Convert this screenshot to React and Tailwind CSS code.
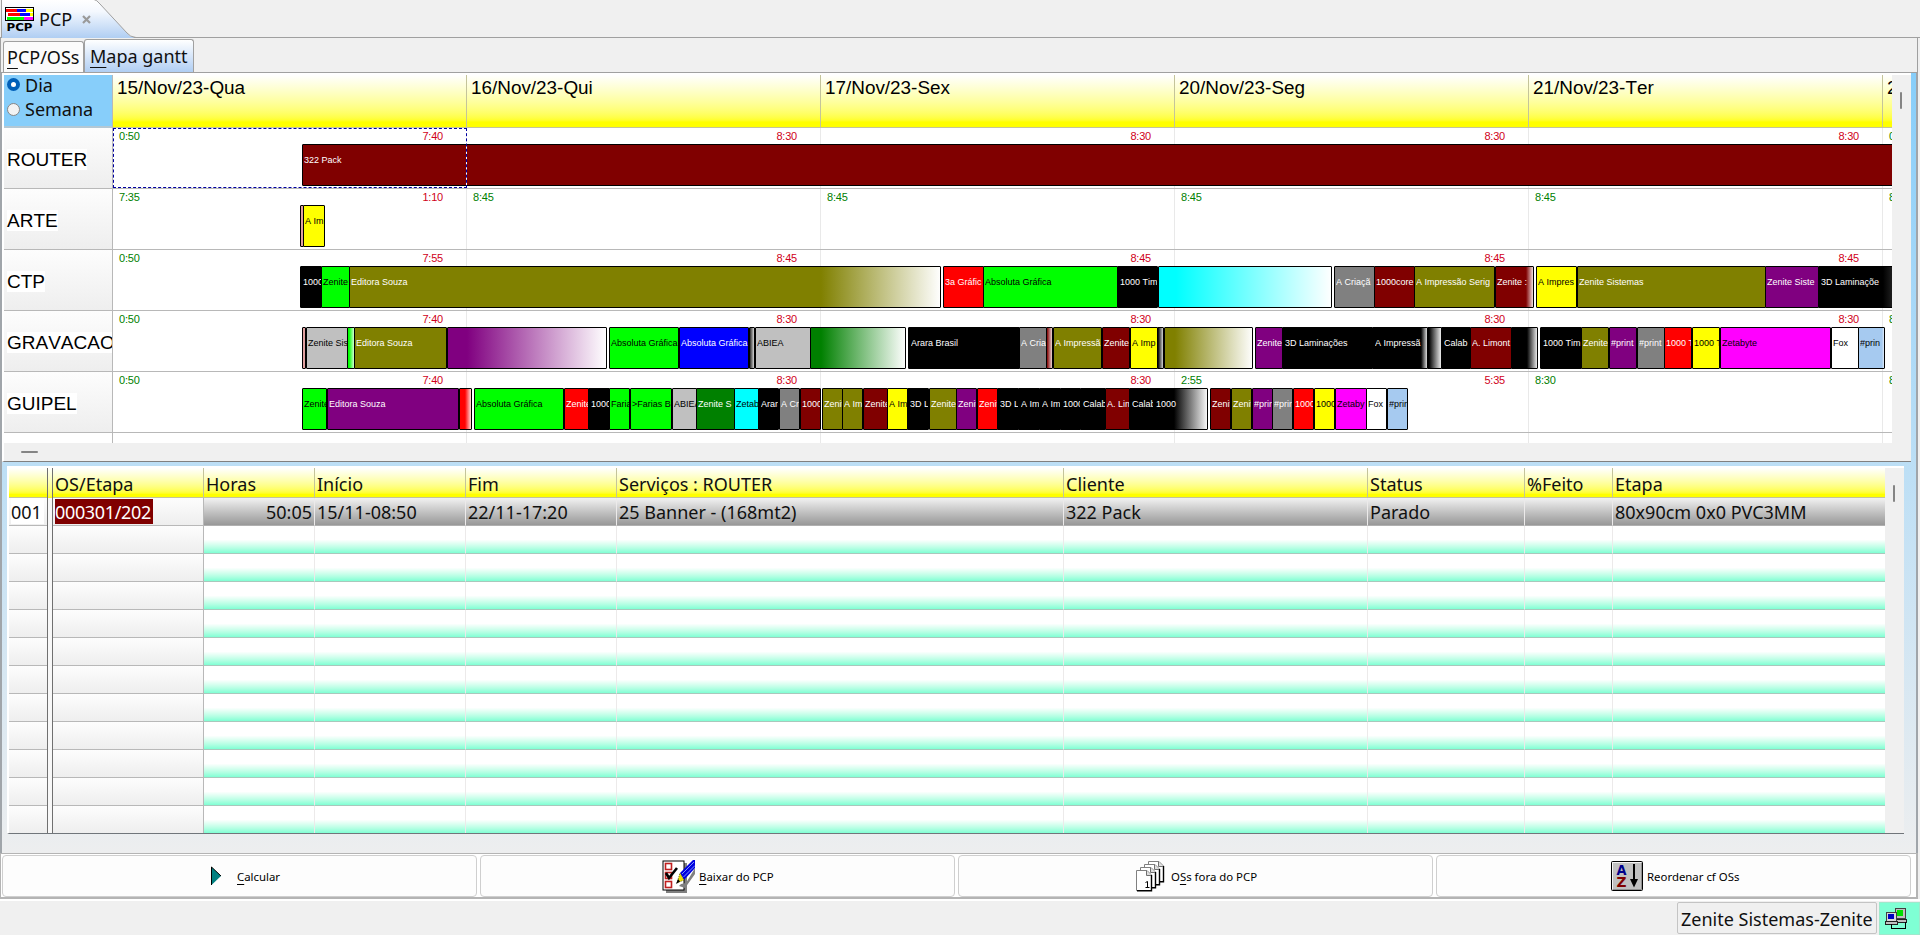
import React from "react";

const SOLID = {
  maroon: "bg-[#800000]",
  pink: "bg-[#e0a0a0]",
  yellow: "bg-[#ffff00]",
  black: "bg-black",
  lime: "bg-[#00ff00]",
  olive: "bg-[#808000]",
  red: "bg-[#ff0000]",
  cyan: "bg-[#00ffff]",
  gray: "bg-[#808080]",
  silver: "bg-[#c0c0c0]",
  purple: "bg-[#800080]",
  blue: "bg-[#0000ff]",
  green: "bg-[#008000]",
  magenta: "bg-[#ff00ff]",
  white: "bg-white",
  sky: "bg-[#a6caf0]",
};

const FADE = {
  maroon: "#800000",
  black: "#000000",
  lime: "#00ff00",
  olive: "#808000",
  red: "#ff0000",
  cyan: "#00ffff",
  purple: "#800080",
  green: "#008000",
  sky: "#a6caf0",
};

const DARK_TEXT = ["yellow", "lime", "cyan", "silver", "magenta", "white", "sky"];

// Bar: [start, end, color, label, solid-until position when the bar fades out]
const ROWS = [
  {
    name: "ROUTER",
    green: ["0:50", "", "", "", "", "0:50"],
    red: ["7:40", "8:30", "8:30", "8:30", "8:30", ""],
    bars: [[302, 1900, "maroon", "322 Pack"]],
  },
  {
    name: "ARTE",
    green: ["7:35", "8:45", "8:45", "8:45", "8:45", "8:45"],
    red: ["1:10", "", "", "", "", ""],
    bars: [
      [300, 304, "pink", ""],
      [303, 325, "yellow", "A Im"],
    ],
  },
  {
    name: "CTP",
    green: ["0:50", "", "", "", "", ""],
    red: ["7:55", "8:45", "8:45", "8:45", "8:45", ""],
    bars: [
      [300, 322, "black", "1000"],
      [321, 350, "lime", "Zenite"],
      [349, 941, "olive", "Editora Souza", 820],
      [943, 984, "red", "3a Gráfic"],
      [983, 1118, "lime", "Absoluta Gráfica"],
      [1117, 1158, "black", "1000 Tim"],
      [1158, 1332, "cyan", "", 1175],
      [1334, 1375, "gray", "A Criaçã"],
      [1374, 1415, "maroon", "1000core"],
      [1414, 1495, "olive", "A Impressão Serig"],
      [1495, 1534, "maroon", "Zenite :", 1525],
      [1536, 1577, "yellow", "A Impres"],
      [1577, 1766, "olive", "Zenite Sistemas"],
      [1765, 1819, "purple", "Zenite Siste"],
      [1818, 1960, "black", "3D Laminaçõe", 1882],
    ],
  },
  {
    name: "GRAVACAO",
    green: ["0:50", "", "", "", "", "8:30"],
    red: ["7:40", "8:30", "8:30", "8:30", "8:30", ""],
    bars: [
      [302, 306, "pink", ""],
      [306, 348, "silver", "Zenite Sis"],
      [347, 355, "lime", "", 348],
      [354, 447, "olive", "Editora Souza"],
      [447, 607, "purple", "", 466],
      [609, 679, "lime", "Absoluta Gráfica"],
      [679, 749, "blue", "Absoluta Gráfica"],
      [749, 755, "black", "", 748],
      [755, 811, "silver", "ABIEA"],
      [810, 906, "green", "", 820],
      [908, 1020, "black", "Arara Brasil"],
      [1019, 1047, "gray", "A Cria"],
      [1046, 1053, "maroon", "", 1046],
      [1053, 1102, "olive", "A Impressã"],
      [1102, 1130, "maroon", "Zenite"],
      [1130, 1158, "yellow", "A Imp"],
      [1157, 1164, "black", "", 1157],
      [1164, 1253, "olive", "", 1174],
      [1255, 1283, "purple", "Zenite"],
      [1282, 1373, "black", "3D Laminações"],
      [1372, 1428, "black", "A Impressã", 1420],
      [1427, 1442, "black", "", 1428],
      [1441, 1471, "black", "Calab"],
      [1470, 1512, "maroon", "A. Limont"],
      [1511, 1538, "black", "", 1526],
      [1540, 1582, "black", "1000 Tim"],
      [1581, 1609, "olive", "Zenite"],
      [1609, 1637, "purple", "#print"],
      [1637, 1665, "gray", "#print"],
      [1664, 1692, "red", "1000 T"],
      [1692, 1720, "yellow", "1000 T"],
      [1720, 1831, "magenta", "Zetabyte"],
      [1831, 1859, "white", "Fox"],
      [1858, 1885, "sky", "#prin", 1881],
    ],
  },
  {
    name: "GUIPEL",
    green: ["0:50", "", "", "2:55", "8:30", "8:30"],
    red: ["7:40", "8:30", "8:30", "5:35", "", ""],
    bars: [
      [302, 327, "lime", "Zenite"],
      [327, 459, "purple", "Editora Souza"],
      [459, 472, "red", "", 464],
      [474, 564, "lime", "Absoluta Gráfica"],
      [564, 589, "red", "Zenite"],
      [588, 610, "black", "1000"],
      [609, 630, "lime", "Farias"],
      [630, 672, "lime", ">Farias B"],
      [672, 697, "silver", "ABIEA"],
      [696, 735, "green", "Zenite S"],
      [734, 759, "cyan", "Zetab"],
      [758, 779, "black", "Arara"],
      [779, 800, "gray", "A Cri"],
      [800, 821, "maroon", "1000"],
      [822, 843, "olive", "Zenit"],
      [842, 863, "olive", "A Im"],
      [863, 888, "maroon", "Zenite"],
      [887, 908, "yellow", "A Im"],
      [907, 929, "black", "3D L"],
      [929, 957, "olive", "Zenite"],
      [956, 977, "purple", "Zenit"],
      [977, 998, "red", "Zenit"],
      [997, 1019, "black", "3D L"],
      [1018, 1040, "black", "A Im"],
      [1039, 1061, "black", "A Im"],
      [1060, 1081, "black", "1000"],
      [1080, 1106, "black", "Calab"],
      [1105, 1130, "maroon", "A. Lim"],
      [1129, 1155, "black", "Calab"],
      [1153, 1208, "black", "1000", 1173],
      [1210, 1231, "maroon", "Zenit"],
      [1231, 1252, "olive", "Zenit"],
      [1252, 1273, "purple", "#prin"],
      [1272, 1293, "gray", "#prin"],
      [1293, 1314, "red", "1000"],
      [1314, 1335, "yellow", "1000"],
      [1335, 1367, "magenta", "Zetaby"],
      [1366, 1387, "white", "Fox"],
      [1387, 1408, "sky", "#prin"],
    ],
  },
];

const DAYS = [
  "15/Nov/23-Qua",
  "16/Nov/23-Qui",
  "17/Nov/23-Sex",
  "20/Nov/23-Seg",
  "21/Nov/23-Ter",
  "22/Nov/23-Qua",
];

function Bar({ bar, prevEnd }) {
  const [start, end, color, label, solid] = bar;
  const style = { width: end - start, marginLeft: start - prevEnd };
  if (solid !== undefined) {
    style.background = `linear-gradient(to right, ${FADE[color]} ${solid - start}px, #fff ${end - start - 1}px)`;
  }
  const dark = DARK_TEXT.includes(color);
  return (
    <div
      className={`h-[42px] shrink-0 overflow-hidden whitespace-pre rounded-[1px] border border-black pl-px pt-[9px] text-[9px] leading-[12px] ${
        dark ? "text-black" : "text-white"
      } ${SOLID[color] || ""}`}
      style={style}
    >
      <div className={`overflow-hidden ${color === "black" ? "ml-px" : ""}`}>{label}</div>
    </div>
  );
}

function GanttRow({ row, selected }) {
  let prev = 113;
  return (
    <div className="flex h-[61px] shrink-0">
      <div className="w-[108px] shrink-0 overflow-hidden border-b border-[#b8b8b8] bg-linear-to-b from-[#fdfdfd] to-[#eeeeee] pl-[3px] pt-[21px]">
        <span className="block w-fit whitespace-nowrap bg-white text-[19px] leading-[21px] text-black">{row.name}</span>
      </div>
      <div className="relative w-[1780px] overflow-hidden border-b border-l border-[#b8b8b8] bg-[repeating-linear-gradient(to_right,white_0_353px,#e9e9e9_353px_354px)]">
        <div className="flex h-[16px]">
          {row.green.map((g, i) => (
            <div key={i} className="flex w-[354px] shrink-0 justify-between pl-[6px] pr-[24px] text-[11px] leading-[16px] tracking-[-0.2px]">
              <span className="text-[#008000]">{g}</span>
              <span className="text-[#d00020]">{row.red[i]}</span>
            </div>
          ))}
        </div>
        <div className="flex">
          {row.bars.map((b, i) => {
            const el = <Bar key={i} bar={b} prevEnd={prev} />;
            prev = b[1];
            return el;
          })}
        </div>
        {selected && (
          <>
            <div className="absolute left-[353px] top-0 h-[60px] w-px bg-white" />
            <div className="absolute left-0 top-0 h-[60px] w-[354px] border border-dashed border-[#0000a0]" />
          </>
        )}
      </div>
    </div>
  );
}

const COLS = [
  ["Horas", "w-[111px]"],
  ["Início", "w-[151px]"],
  ["Fim", "w-[151px]"],
  ["Serviços : ROUTER", "w-[447px]"],
  ["Cliente", "w-[304px]"],
  ["Status", "w-[157px]"],
  ["%Feito", "w-[88px]"],
  ["Etapa", "w-[272px]"],
];

const DATA = ["50:05", "15/11-08:50", "22/11-17:20", "25 Banner - (168mt2)", "322 Pack", "Parado", "", "80x90cm 0x0 PVC3MM"];

function TableRow({ first }) {
  return (
    <div className="flex h-7 shrink-0 leading-[29px]">
      <div className="w-[38px] shrink-0 border-b border-[#b8b8b8] bg-linear-to-b from-[#fdfdfd] to-[#eeeeee] pl-[2px]">
        {first && <span className="block h-[26px] w-fit bg-white pr-[2px]">001</span>}
      </div>
      <div className="w-[6px] shrink-0 border-x border-[#707070] bg-[#f8f8f8]" />
      <div className="w-[151px] shrink-0 border-b border-r border-[#b8b8b8] bg-linear-to-b from-[#fdfdfd] to-[#eeeeee] pl-[2px] pt-px">
        {first && (
          <span className="block h-[25px] w-[98px] overflow-hidden whitespace-nowrap bg-[#800000] leading-[27px] tracking-[-0.35px] text-white">
            000301/202
          </span>
        )}
      </div>
      {COLS.map(([name, w], i) => (
        <div
          key={name}
          className={`${w} shrink-0 overflow-hidden whitespace-nowrap px-[2px] ${i < 7 ? "border-r border-r-[#eceaea]" : ""} ${
            i === 0 && first ? "text-right" : ""
          } ${
            first
              ? "border-b border-b-[#b0b0b0] bg-linear-to-b from-[#f2f2f2] to-[#989898]"
              : "border-b border-b-[#a9c8bc] bg-linear-to-b from-white from-50% to-[#7fffd4]"
          }`}
        >
          {first ? DATA[i] : ""}
        </div>
      ))}
    </div>
  );
}

function PcpIcon() {
  return (
    <svg width="30" height="26" viewBox="0 0 30 26" shapeRendering="crispEdges">
      <rect x="0" y="0" width="29" height="14" fill="#000" />
      <rect x="1" y="1" width="27" height="12" fill="#fff" />
      <rect x="1" y="2" width="11" height="3" fill="#f00" />
      <rect x="12" y="2" width="9" height="3" fill="#00f" />
      <rect x="21" y="2" width="7" height="3" fill="#ff0" />
      <rect x="3" y="6" width="12" height="3" fill="#f00" />
      <rect x="15" y="6" width="10" height="3" fill="#00f" />
      <rect x="25" y="6" width="3" height="3" fill="#ff0" />
      <rect x="2" y="10" width="17" height="3" fill="#0f0" />
      <rect x="19" y="10" width="9" height="3" fill="#f0f" />
      <text x="1.5" y="24" fontFamily="DejaVu Sans, sans-serif" fontWeight="700" fontSize="10.5" textLength="26" lengthAdjust="spacingAndGlyphs">PCP</text>
    </svg>
  );
}

function CheckIcon() {
  return (
    <svg width="33" height="33" viewBox="0 0 33 33">
      <path d="M4 3H25V33H4z" fill="#808080" />
      <rect x="1" y="1" width="21" height="29" fill="#fff" stroke="#000" />
      <g fill="none" stroke="#c02020" strokeWidth="1.6">
        <rect x="3.5" y="3.5" width="6" height="6" />
        <rect x="3.5" y="12.5" width="6" height="6" />
        <rect x="3.5" y="21.5" width="6" height="6" />
      </g>
      <path d="M4 13L7 18L15 8" fill="none" stroke="#000" strokeWidth="2.6" />
      <path d="M19 24L24 23L33 8V14L23 28L17 26z" fill="#808080" />
      <path d="M18 13L31 0H33V8L22 20z" fill="#0000e0" />
      <path d="M20 14L32 2M21.500 17L33 5.500" stroke="#9ab8ff" strokeWidth="0.8" />
      <path d="M18 13L22 20L15 23z" fill="#f0e000" stroke="#404000" strokeWidth="0.7" strokeDasharray="1 1" />
      <path d="M16 19L18 21.500L14 24z" fill="#000" />
    </svg>
  );
}

function PagesIcon() {
  return (
    <svg width="30" height="31" viewBox="0 0 30 31">
      {[12, 8, 4, 0].map((o) => (
        <g key={o} transform={`translate(${o} ${9 - o * 0.75})`}>
          <path d="M0.500 0.500H11L15.500 5V20.500H0.500z" fill="#fff" stroke="#808080" />
          <path d="M15.500 5V20.700H1" fill="none" stroke="#000" strokeWidth="1.4" />
          <path d="M10.500 1V5.500H15" fill="#ddd" stroke="#707070" />
        </g>
      ))}
      <path d="M9.500 21.500L11.500 20.500V26.500M9.500 26.500H13.500" fill="none" stroke="#000" />
    </svg>
  );
}

function SortIcon() {
  return (
    <svg width="32" height="30" viewBox="0 0 32 30">
      <rect x="0.500" y="0.500" width="31" height="29" rx="1" fill="#c0c0c0" stroke="#000" />
      <path d="M1.500 28V1.500H30" fill="none" stroke="#f4f4f4" />
      <path d="M2 28.500H30.500V2" fill="none" stroke="#909090" />
      <text x="5.500" y="14" fontFamily="DejaVu Sans, sans-serif" fontWeight="700" fontSize="13.500" fill="#00008b" textLength="10" lengthAdjust="spacingAndGlyphs">A</text>
      <text x="5.500" y="26" fontFamily="DejaVu Sans, sans-serif" fontWeight="700" fontSize="13.500" fill="#800000" textLength="10" lengthAdjust="spacingAndGlyphs">Z</text>
      <path d="M22 3H24V18H27L23 26.500L19 18H22z" fill="#000" />
    </svg>
  );
}

function NetworkIcon() {
  return (
    <svg width="22" height="21" viewBox="0 0 22 21" shapeRendering="crispEdges">
      <rect x="10" y="0" width="10" height="10" fill="#c0c0c0" stroke="#404040" />
      <rect x="12" y="2" width="6" height="6" fill="#00e000" />
      <rect x="10" y="11" width="11" height="3" fill="#c0c0c0" stroke="#202020" />
      <rect x="1" y="4" width="10" height="9" fill="#d8d8d8" stroke="#404040" />
      <rect x="3" y="6" width="6" height="5" fill="#0000c0" />
      <rect x="0" y="13" width="12" height="3" fill="#c0c0c0" stroke="#202020" />
      <path d="M6 16V20H20V14" fill="none" stroke="#000" />
    </svg>
  );
}

function ActionButton({ width, icon, children, iconClass }) {
  return (
    <button
      className={`${width} flex h-[42px] shrink-0 items-center whitespace-nowrap rounded-[4px] border border-[#cfcfcf] bg-[#fdfdfd] text-[11.4px] text-black`}
    >
      <span className={iconClass}>{icon}</span>
      <span className="pt-[2px]">{children}</span>
    </button>
  );
}

export default function App() {
  return (
    <div className="flex h-[935px] w-[1920px] flex-col overflow-hidden bg-[#f0f0f0] font-['Noto_Sans','Open_Sans',sans-serif] text-[18px] text-[#101010]">
      <div className="flex h-[38px] shrink-0 border-b border-[#a0a0a0]">
        <div className="relative mb-[-1px] h-[38px] w-[136px]">
          <svg className="absolute left-0 top-0" width="136" height="38" viewBox="0 0 136 38">
            <defs>
              <linearGradient id="tab" x1="0" y1="0" x2="0" y2="1">
                <stop offset="0" stopColor="#ffffff" />
                <stop offset="0.300" stopColor="#f4f8fe" />
                <stop offset="1" stopColor="#b0cef3" />
              </linearGradient>
            </defs>
            <path d="M1 0H93Q97 0 100 4L127 33Q130 37 134 37.500V38H1z" fill="url(#tab)" />
            <path d="M1.500 38V0M93 -1Q97 0 100 4L127 33Q130 37 136 37.500" fill="none" stroke="#a0a0a0" />
          </svg>
          <div className="relative flex items-start pl-[5px] pt-[7px]">
            <PcpIcon />
            <span className="ml-[4px] leading-[24px]">PCP</span>
            <svg className="ml-[10px] mt-[8px]" width="9" height="9" viewBox="0 0 9 9">
              <path d="M1 1L8 8M8 1L1 8" stroke="#9a9a9a" strokeWidth="2.200" />
            </svg>
          </div>
        </div>
      </div>

      <div className="mr-[2px] flex h-[35px] shrink-0 items-end border-b border-l border-r border-[#a0a0a0] pl-[2px]">
        <div className="h-[31px] w-[81px] whitespace-nowrap rounded-t-[3px] border border-b-0 border-[#a0a0a0] bg-[#fbfbfb] pl-[3px] leading-[30px]">
          <u className="underline-offset-[4px]">P</u>CP/OSs
        </div>
        <div className="h-[33px] w-[110px] whitespace-nowrap rounded-t-[3px] border border-b-0 border-[#a0a0a0] bg-linear-to-b from-white to-[#b0cef3] pl-[5px] leading-[32px]">
          <u className="underline-offset-[4px]">M</u>apa gantt
        </div>
      </div>

      <div className="mr-[2px] flex h-[780px] shrink-0 flex-col border-x-2 border-[#a0a5aa] bg-linear-to-b from-[#87cefa] to-[#edeeef]">
        <div className="flex h-[389px] w-[1909px] shrink-0 border-b border-l-2 border-t-2 border-b-[#808080] border-l-white border-t-white bg-[#f0f0f0]">
          <div className="flex w-[1888px] shrink-0 flex-col overflow-hidden font-['Liberation_Sans',Arial,sans-serif] [font-kerning:none]">
            <div className="flex h-[53px] shrink-0">
              <div className="w-[108px] shrink-0 border-b-2 border-[#b4c8d4] bg-[#87cefa] pl-[3px] font-['Noto_Sans',sans-serif] text-[18px]">
                <label className="flex h-[20px] items-center gap-[5px] leading-[20px]">
                  <span className="mb-[2px] flex h-[13px] w-[13px] items-center justify-center rounded-full bg-[#005fb8]">
                    <span className="h-[5px] w-[5px] rounded-full bg-white" />
                  </span>
                  Dia
                </label>
                <label className="flex h-[28px] items-center gap-[5px]">
                  <span className="h-[13px] w-[13px] rounded-full border border-[#868686] bg-[#f3f3f3]" />
                  Semana
                </label>
              </div>
              <div className="flex w-[1780px] overflow-hidden border-l border-[#b8b8b8]">
                {DAYS.map((d) => (
                  <div
                    key={d}
                    className="w-[354px] shrink-0 border-b border-r border-[#c4c49a] bg-linear-to-b from-white to-[#ffff00] to-90% pl-[4px] pt-[2px] text-[18.9px] leading-[22px] text-black"
                  >
                    {d}
                  </div>
                ))}
              </div>
            </div>
            {ROWS.map((r, i) => (
              <GanttRow key={r.name} row={r} selected={i === 0} />
            ))}
            <div className="flex h-[10px] shrink-0 bg-white">
              <div className="w-[108px] shrink-0" />
              <div className="w-[1780px] border-l border-[#b8b8b8] bg-[repeating-linear-gradient(to_right,white_0_353px,#e9e9e9_353px_354px)]" />
            </div>
            <div className="flex h-[18px] shrink-0 items-center bg-[#f0f0f0] pl-[17px]">
              <div className="h-[2px] w-[17px] rounded bg-[#858585]" />
            </div>
          </div>
          <div className="w-[16px] pl-[8px] pt-[17px]">
            <div className="h-[17px] w-[2px] rounded bg-[#858585]" />
          </div>
        </div>

        <div className="ml-[5px] mt-[4px] flex h-[368px] w-[1897px] shrink-0 overflow-hidden border-b border-l-2 border-t-2 border-b-[#70757a] border-l-white border-t-white bg-[#f0f0f0]">
          <div className="flex w-[1876px] shrink-0 flex-col">
            <div className="flex h-[30px] shrink-0 leading-[32px]">
              <div className="w-[38px] shrink-0 border-b border-[#c4c49a] bg-linear-to-b from-white to-[#ffff00] to-90%" />
              <div className="w-[6px] shrink-0 border-x border-[#707070] bg-linear-to-b from-white to-[#ffff00]" />
              <div className="w-[151px] shrink-0 border-b border-r border-[#c4c49a] bg-linear-to-b from-white to-[#ffff00] to-90% pl-[2px]">OS/Etapa</div>
              {COLS.map(([name, w], i) => (
                <div
                  key={name}
                  className={`${w} shrink-0 border-b border-[#c4c49a] bg-linear-to-b from-white to-[#ffff00] to-90% pl-[2px] ${
                    i < 7 ? "border-r" : ""
                  }`}
                >
                  {name}
                </div>
              ))}
            </div>
            {Array.from({ length: 12 }, (_, i) => (
              <TableRow key={i} first={i === 0} />
            ))}
          </div>
          <div className="w-[19px] pl-[8px] pt-[17px]">
            <div className="h-[17px] w-[2px] rounded bg-[#858585]" />
          </div>
        </div>
      </div>

      <div className="mr-[2px] flex h-[46px] shrink-0 gap-[3px] border-b-2 border-l border-r-2 border-t border-[#b4b4b4] bg-white pl-px pt-px">
        <ActionButton
          width="w-[475px]"
          iconClass="ml-[208px] mr-[15px]"
          icon={
            <svg width="11" height="20" viewBox="0 0 11 20">
              <path d="M0.500 1V19L10 10z" fill="#008080" />
              <path d="M0.500 19V1L10 10" fill="none" stroke="#000" />
            </svg>
          }
        >
          <u className="underline-offset-[3px]">C</u>alcular
        </ActionButton>
        <ActionButton width="w-[475px]" iconClass="ml-[181px] mr-[4px]" icon={<CheckIcon />}>
          <u className="underline-offset-[3px]">B</u>aixar do PCP
        </ActionButton>
        <ActionButton width="w-[475px]" iconClass="ml-[177px] mr-[5px]" icon={<PagesIcon />}>
          O<u className="underline-offset-[3px]">S</u>s fora do PCP
        </ActionButton>
        <ActionButton width="w-[475px]" iconClass="ml-[174px] mr-[4px]" icon={<SortIcon />}>
          Reordenar cf OSs
        </ActionButton>
      </div>

      <div className="flex flex-1 justify-end gap-[2px] border-t-2 border-white pt-px">
        <div className="h-[32px] w-[200px] whitespace-nowrap rounded-[2px] border border-[#c4c4c4] pl-[3px] leading-[32px]">Zenite Sistemas-Zenite</div>
        <div className="flex h-[33px] w-[41px] items-center border border-[#9fe8cc] bg-[#7fffd4] pl-[5px]">
          <NetworkIcon />
        </div>
      </div>
    </div>
  );
}
